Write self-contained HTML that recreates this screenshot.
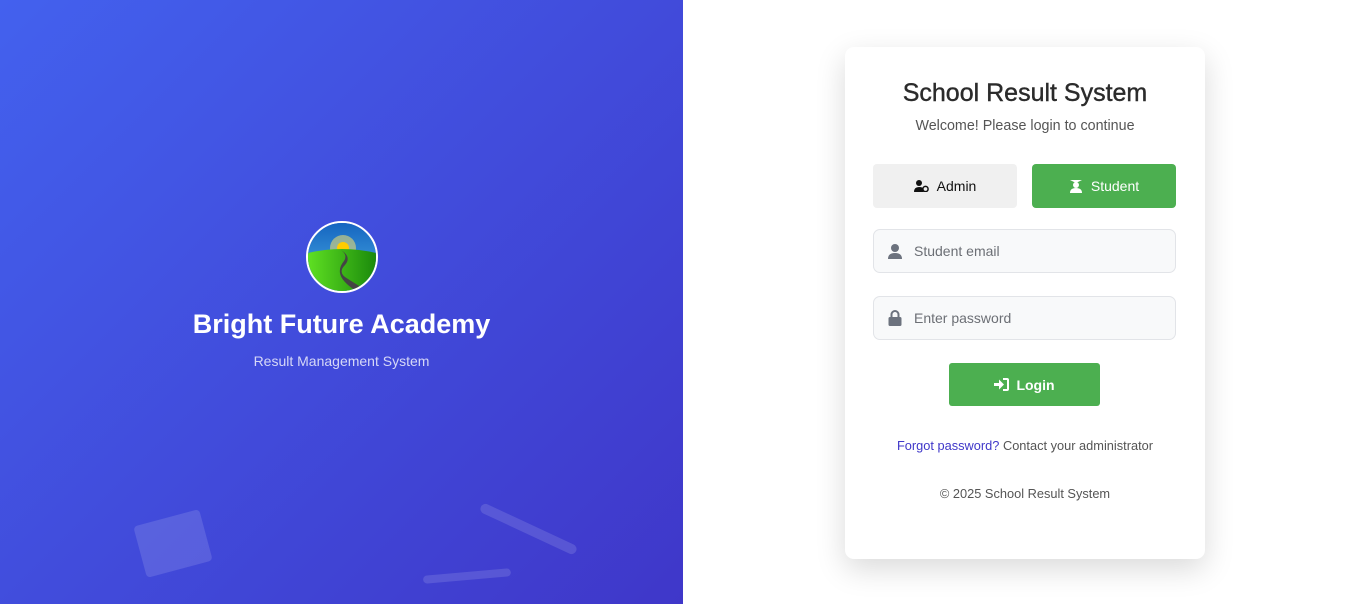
<!DOCTYPE html>
<html><head><meta charset="utf-8"><style>
*{box-sizing:border-box;margin:0;padding:0}
body{width:1358px;height:604px;overflow:hidden;font-family:"Liberation Sans",sans-serif;background:#fff;position:relative}
.left{position:absolute;left:0;top:0;width:683px;height:604px;background:linear-gradient(135deg,#4361ee 0%,#3f37c9 100%);overflow:hidden}
.shape{position:absolute;background:rgba(255,255,255,0.13)}
.logo{position:absolute;left:306px;top:221px;width:72px;height:72px;border-radius:50%;border:2px solid #fff;overflow:hidden}
.t1{position:absolute;left:0;width:683px;top:309px;text-align:center;color:#fff;font-size:27px;font-weight:bold}
.t2{position:absolute;left:0;width:683px;top:353px;text-align:center;color:#d6d8f7;font-size:14px}
.card{position:absolute;left:845px;top:47px;width:360px;height:512px;background:#fff;border-radius:9px;box-shadow:0 10px 30px rgba(0,0,0,0.15)}
.abs{position:absolute}
.h{left:0;width:360px;top:32px;text-align:center;font-size:25px;color:#2b2b2b;-webkit-text-stroke:0.4px #2b2b2b}
.sub{left:0;width:360px;top:71px;text-align:center;font-size:14.3px;color:#555}
.btn{top:117px;width:144px;height:44px;border-radius:4px;display:flex;align-items:center;justify-content:center;font-size:14px;gap:8px}
.inp{left:28px;width:303px;height:44px;border:1px solid #e2e4e8;border-radius:7px;background:#f8f9fa;font-size:14px;color:#6c6f75;display:flex;align-items:center;padding-left:14px;gap:12px}
.login{left:104px;top:316px;width:151px;height:43px;background:#4caf50;border-radius:3px;color:#fff;font-weight:bold;font-size:14px;display:flex;align-items:center;justify-content:center;gap:7px}
.f{left:0;width:360px;text-align:center;font-size:12.8px;color:#555}
</style></head><body>
<div class="left">
 <div class="shape" style="left:139px;top:517px;width:68px;height:53px;border-radius:4px;transform:rotate(-15deg)"></div>
 <div class="shape" style="left:476px;top:524px;width:105px;height:10px;border-radius:5px;transform:rotate(25deg)"></div>
 <div class="shape" style="left:423px;top:572px;width:88px;height:8px;border-radius:4px;transform:rotate(-5deg)"></div>
 <div class="logo"><svg width="68" height="68" viewBox="0 0 68 68">
  <defs><linearGradient id="sky" x1="0" y1="0" x2="0" y2="1"><stop offset="0" stop-color="#1565c0"/><stop offset="1" stop-color="#4fb3e8"/></linearGradient>
  <linearGradient id="g" x1="0" y1="0" x2="1" y2="0"><stop offset="0" stop-color="#5fe022"/><stop offset="1" stop-color="#1b8a0c"/></linearGradient></defs>
  <rect width="68" height="68" fill="url(#sky)"/>
  <circle cx="35" cy="25" r="13" fill="#f7e26b" opacity="0.55"/>
  <circle cx="35" cy="25" r="6" fill="#ffcc00"/>
  <path d="M0 30 Q34 22 68 30 L68 68 L0 68Z" fill="url(#g)"/>
  <path d="M33 27 Q44 34 37 42 Q29 50 40 56 L56 66 L48 68 Q33 58 32 50 Q31 44 36 38 Q40 32 33 27Z" fill="#444"/>
 </svg></div>
 <div class="t1">Bright Future Academy</div>
 <div class="t2">Result Management System</div>
</div>
<div class="card">
 <div class="abs h">School Result System</div>
 <div class="abs sub">Welcome! Please login to continue</div>
 <div class="abs btn" style="left:28px;background:#f0f0f0;color:#111"><svg width="15" height="12" viewBox="0 0 15 12"><circle cx="5" cy="3" r="3" fill="#111"/><path d="M0 12 Q0 7 5 7 Q9 7 9.5 9 L9.5 12Z" fill="#111"/><circle cx="11.5" cy="9" r="2.6" fill="none" stroke="#111" stroke-width="1.5"/></svg>Admin</div>
 <div class="abs btn" style="left:187px;background:#4caf50;color:#fff"><svg width="14" height="13" viewBox="0 0 14 13"><path d="M1 0 H13 L7 3Z" fill="#fff"/><circle cx="7" cy="5" r="3" fill="#fff"/><path d="M1 13 Q1 8 7 8 Q13 8 13 13Z" fill="#fff"/></svg>Student</div>
 <div class="abs inp" style="top:182px"><svg width="14" height="15" viewBox="0 0 14 15"><circle cx="7" cy="4" r="4" fill="#6c727e"/><path d="M0 15 Q0 9 7 9 Q14 9 14 15Z" fill="#6c727e"/></svg>Student email</div>
 <div class="abs inp" style="top:249px"><svg width="14" height="16" viewBox="0 0 14 16"><path d="M3.5 7 V4.5 a3.5 3.5 0 0 1 7 0 V7" fill="none" stroke="#6c727e" stroke-width="2"/><rect x="0.5" y="7" width="13" height="9" rx="1.5" fill="#6c727e"/></svg>Enter password</div>
 <div class="abs login"><svg width="15" height="13" viewBox="0 0 15 13"><path d="M0 5 H5 V1.5 L10 6.5 L5 11.5 V8 H0Z" fill="#fff"/><path d="M9 1 H13 Q14 1 14 2 V11 Q14 12 13 12 H9" fill="none" stroke="#fff" stroke-width="2"/></svg>Login</div>
 <div class="abs f" style="top:391px"><span style="color:#3f37c9">Forgot password?</span> Contact your administrator</div>
 <div class="abs f" style="top:439px">© 2025 School Result System</div>
</div>
</body></html>
